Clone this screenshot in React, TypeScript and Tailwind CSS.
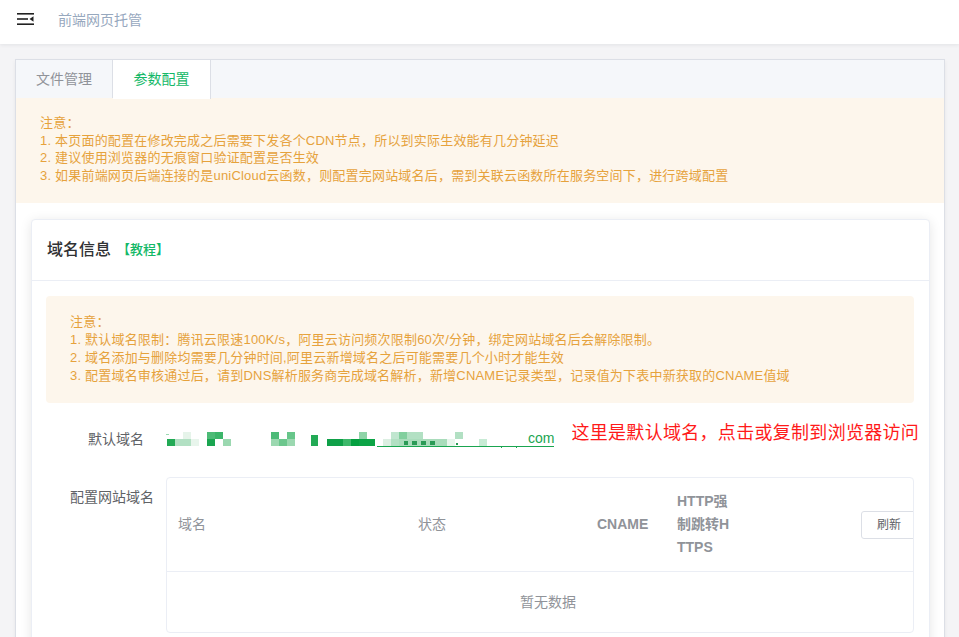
import React from "react";

const FONT = { fontFamily: '"Liberation Sans", "Noto Sans CJK SC", sans-serif' };

function Mosaic() {
  const blocks: [number, number, number, number, string][] = [
    [17, 3, 8, 7, "#e6f4ea"],
    [41, 3, 8, 7, "#4cbb76"],
    [49, 3, 8, 7, "#3cb56a"],
    [105, 3, 8, 7, "#4dbb78"],
    [121, 3, 8, 7, "#67c68a"],
    [193, 3, 8, 7, "#8fd4a8"],
    [225, 3, 8, 7, "#c0e6cf"],
    [233, 3, 8, 7, "#82cf9e"],
    [241, 3, 16, 7, "#b2e0c3"],
    [289, 3, 8, 7, "#b2e0c3"],
    [1, 10, 8, 7, "#22aa55"],
    [9, 10, 8, 7, "#b2e0c3"],
    [17, 10, 8, 7, "#b2e0c3"],
    [25, 10, 8, 7, "#e8f5ec"],
    [41, 10, 8, 7, "#1aa550"],
    [57, 10, 8, 7, "#9bd8b0"],
    [105, 10, 8, 7, "#9bd8b0"],
    [113, 10, 8, 7, "#6cc78d"],
    [121, 10, 8, 7, "#9bd8b0"],
    [145, 6, 7, 11, "#22aa55"],
    [161, 10, 16, 7, "#0fa048"],
    [177, 10, 8, 7, "#3db86a"],
    [185, 10, 8, 7, "#04a040"],
    [193, 10, 16, 7, "#0ca446"],
    [217, 10, 8, 7, "#dcefe2"],
    [225, 10, 8, 7, "#b2e0c3"],
    [233, 10, 48, 7, "#a9dcbb"],
    [281, 10, 8, 7, "#e8f5ec"],
    [313, 10, 8, 7, "#c8ebd5"],
  ];
  return (
    <svg width="362" height="20" viewBox="0 0 362 20" className="shrink-0">
      <rect x="0" y="5" width="3" height="1" fill="#9bd8b0" />
      {blocks.map(([x, y, w, h, c], i) => (
        <rect key={i} x={x} y={y} width={w} height={h} fill={c} />
      ))}
      <rect x="238" y="12" width="4" height="4" fill="#2a9a55" />
      <rect x="246" y="12" width="5" height="4" fill="#2a9a55" />
      <rect x="255" y="12" width="5" height="4" fill="#2a9a55" />
      <rect x="264" y="12" width="5" height="4" fill="#2a9a55" />
      <rect x="290" y="14" width="2" height="2" fill="#2a9a55" />
      <rect x="211" y="17" width="151" height="1" fill="#1aa550" />
      <rect x="335" y="17" width="1" height="2" fill="#1aa550" />
      <rect x="350" y="17" width="1" height="2" fill="#1aa550" />
    </svg>
  );
}

function MenuIcon() {
  return (
    <svg width="17" height="14" viewBox="0 0 17 14">
      <rect x="0" y="1" width="17" height="1.6" fill="#222" />
      <rect x="0" y="6.2" width="11" height="1.6" fill="#222" />
      <path d="M16.5 4.2 L12.5 7 L16.5 9.8 Z" fill="#222" />
      <rect x="0" y="11.4" width="17" height="1.6" fill="#222" />
    </svg>
  );
}

export default function App() {
  return (
    <div className="min-h-screen bg-[#f4f4f6] text-[14px]" style={FONT}>
      <div className="h-[44px] bg-white flex items-center shadow-[0_1px_4px_rgba(0,21,41,0.08)] relative z-10">
        <div className="ml-[17px] mt-[-7px] flex items-center">
          <MenuIcon />
        </div>
        <div className="ml-[24px] mt-[-4px] text-[#97a8be] text-[14px]">前端网页托管</div>
      </div>

      <div className="pt-[15px] pl-[15px] pr-[14px]">
        <div className="bg-white border border-[#dcdfe6] shadow-[0_2px_4px_rgba(0,0,0,0.06)]">
          <div className="flex h-[39px] bg-[#f5f7fa] border-b border-[#dcdfe6]">
            <div className="w-[97px] flex items-center justify-center text-[#909399] border-r border-[#dcdfe6]">
              文件管理
            </div>
            <div className="w-[98px] -mb-px bg-white flex items-center justify-center text-[#13b867] border-r border-[#dcdfe6]">
              参数配置
            </div>
          </div>

          <div className="bg-[#fdf6ec] text-[#e6a23c] text-[13px] tracking-[0.2px] leading-[17.5px] pl-[24px] pt-[16px] pb-[19px] -mt-px">
            <div>注意：</div>
            <div>1. 本页面的配置在修改完成之后需要下发各个CDN节点，所以到实际生效能有几分钟延迟</div>
            <div>2. 建议使用浏览器的无痕窗口验证配置是否生效</div>
            <div>3. 如果前端网页后端连接的是uniCloud云函数，则配置完网站域名后，需到关联云函数所在服务空间下，进行跨域配置</div>
          </div>

          <div className="pl-[15px] pr-[14px] pt-[16px] pb-[20px]">
            <div className="bg-white border border-[#ebeef5] rounded-[4px] shadow-[0_2px_12px_0_rgba(0,0,0,0.1)]">
              <div className="h-[61px] border-b border-[#ebeef5] flex items-center pl-[15px]">
                <span className="text-[16px] font-medium text-[#303133]">域名信息</span>
                <span className="ml-[6px] text-[13px] font-medium text-[#13b867]">【教程】</span>
              </div>
              <div className="pl-[14px] pr-[15px] pt-[15px] pb-[20px]">
                <div className="bg-[#fdf6ec] rounded-[4px] text-[#e6a23c] text-[13px] tracking-[0.2px] leading-[18px] pl-[24px] pt-[17px] pb-[18px]">
                  <div>注意：</div>
                  <div>1. 默认域名限制：腾讯云限速100K/s，阿里云访问频次限制60次/分钟，绑定网站域名后会解除限制。</div>
                  <div>2. 域名添加与删除均需要几分钟时间,阿里云新增域名之后可能需要几个小时才能生效</div>
                  <div>3. 配置域名审核通过后，请到DNS解析服务商完成域名解析，新增CNAME记录类型，记录值为下表中新获取的CNAME值域</div>
                </div>

                <div className="mt-[16px] h-[40px] flex items-center">
                  <div className="w-[120px] shrink-0 text-right pr-[22px] text-[#606266]">默认域名</div>
                  <div className="flex items-end shrink-0">
                    <Mosaic />
                    <span className="text-[#1aa550] text-[14px] leading-[16px] border-b border-[#1aa550] mb-[2px]">com</span>
                  </div>
                  <div className="ml-[17px] mb-[12px] text-[18px] tracking-[0.3px] text-[#ff1a1a] whitespace-nowrap">这里是默认域名，点击或复制到浏览器访问</div>
                </div>

                <div className="mt-[18px] flex items-start">
                  <div className="w-[120px] shrink-0 h-[40px] flex items-center justify-end pr-[12px] text-[#606266]">
                    配置网站域名
                  </div>
                  <div className="flex-1 border border-[#ebeef5] rounded-[4px] overflow-hidden">
                    <div className="w-[762px]">
                      <div className="grid grid-cols-[240px_179px_80px_80px_183px] border-b border-[#ebeef5] h-[94px] items-center text-[#909399]">
                        <div className="px-[11px]">域名</div>
                        <div className="px-[11px]">状态</div>
                        <div className="px-[11px] font-bold">CNAME</div>
                        <div className="px-[11px] font-bold leading-[23px] break-all">HTTP强制跳转HTTPS</div>
                        <div className="pl-[115px]">
                          <button className="h-[28px] w-[56px] border border-[#dcdfe6] rounded-[3px] bg-white text-[12px] text-[#606266]">
                            刷新
                          </button>
                        </div>
                      </div>
                      <div className="h-[60px] flex items-center justify-center text-[#909399]">暂无数据</div>
                    </div>
                  </div>
                </div>
              </div>
            </div>
          </div>
        </div>
      </div>
    </div>
  );
}
